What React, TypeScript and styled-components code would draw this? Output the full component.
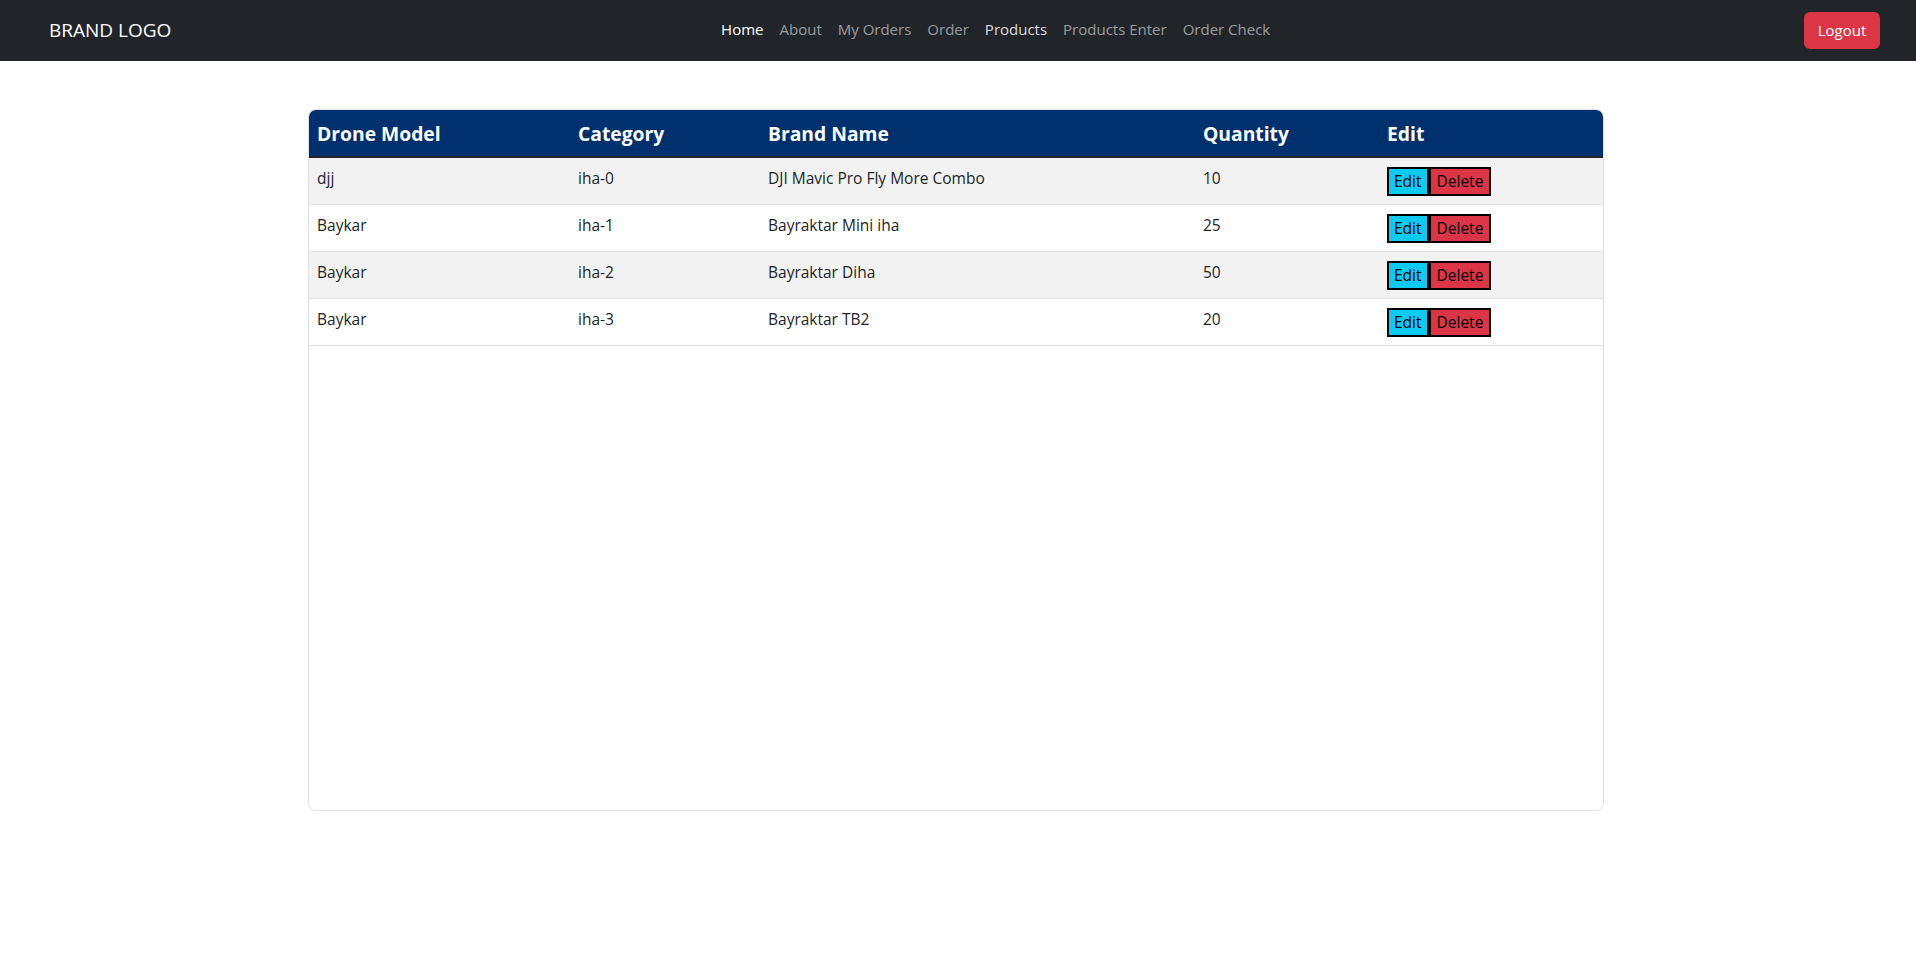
import React from "react";
import styled, { createGlobalStyle } from "styled-components";

const GlobalStyle = createGlobalStyle`
  * { box-sizing: border-box; }
  html, body { margin: 0; padding: 0; background: #fff; }
  body { font-family: "Open Sans", "Noto Sans", sans-serif; color: #212529; }
`;

const NavBar = styled.nav`
  height: 61px;
  background: #212529;
  display: flex;
  align-items: center;
  padding: 0 36px 0 49px;
`;

const Brand = styled.a`
  color: #fff;
  font-size: 19px;
  text-decoration: none;
  white-space: nowrap;
  margin-bottom: 2px;
`;

const NavList = styled.ul`
  list-style: none;
  display: flex;
  margin: 0 auto;
  padding: 0 0 4px 16px;
`;

const NavLink = styled.a<{ $tone: "active" | "bright" | "muted" }>`
  display: block;
  padding: 8px 8px;
  font-size: 15px;
  text-decoration: none;
  white-space: nowrap;
  color: ${(p) =>
    p.$tone === "active" ? "#ffffff" : p.$tone === "bright" ? "rgba(255,255,255,0.85)" : "rgba(255,255,255,0.55)"};
`;

const LogoutButton = styled.button`
  width: 76px;
  height: 37px;
  border: none;
  border-radius: 6px;
  background: #dc3545;
  color: #fff;
  font-family: inherit;
  font-size: 15px;
  padding: 0 0 2px;
`;

const Container = styled.main`
  width: 1296px;
  margin: 48px auto 0;
  position: relative;
  left: -2px;
`;

const Card = styled.div`
  height: 702px;
  border: 1px solid #dee2e6;
  border-radius: 8px;
  overflow: hidden;
`;

const Table = styled.table`
  width: 100%;
  border-collapse: collapse;
  table-layout: fixed;
`;

const HeadCell = styled.th<{ $w: number }>`
  width: ${(p) => p.$w}px;
  background: #00306e;
  color: #fff;
  font-size: 19.3px;
  font-weight: 700;
  text-align: left;
  height: 47px;
  padding: 0 8px;
  border-bottom: 2px solid #212529;
`;

const Row = styled.tr<{ $striped: boolean }>`
  background: ${(p) => (p.$striped ? "#f2f2f2" : "#ffffff")};
  border-bottom: 1px solid #dee2e6;
`;

const Cell = styled.td`
  height: 47px;
  padding: 0 8px 5px;
  font-size: 15.5px;
  color: #212529;
  vertical-align: middle;
`;

const ActionCell = styled(Cell)`
  padding-bottom: 0;
  padding-top: 1px;
`;

const ActionButton = styled.button<{ $kind: "edit" | "delete" }>`
  height: 29px;
  border: 2px solid #000;
  background: ${(p) => (p.$kind === "edit" ? "#0dcaf0" : "#dc3545")};
  color: #000;
  font-family: inherit;
  font-size: 15.5px;
  padding: 0 ${(p) => (p.$kind === "edit" ? "5px" : "6px")};
  margin: 0;
  vertical-align: middle;
`;

const columns = [
  { label: "Drone Model", w: 261 },
  { label: "Category", w: 190 },
  { label: "Brand Name", w: 435 },
  { label: "Quantity", w: 184 },
  { label: "Edit", w: 224 },
];

const rows = [
  ["djj", "iha-0", "DJI Mavic Pro Fly More Combo", "10"],
  ["Baykar", "iha-1", "Bayraktar Mini iha", "25"],
  ["Baykar", "iha-2", "Bayraktar Diha", "50"],
  ["Baykar", "iha-3", "Bayraktar TB2", "20"],
];

const navItems: { label: string; tone: "active" | "bright" | "muted" }[] = [
  { label: "Home", tone: "active" },
  { label: "About", tone: "muted" },
  { label: "My Orders", tone: "muted" },
  { label: "Order", tone: "muted" },
  { label: "Products", tone: "bright" },
  { label: "Products Enter", tone: "muted" },
  { label: "Order Check", tone: "muted" },
];

export default function App() {
  return (
    <>
      <GlobalStyle />
      <NavBar>
        <Brand href="#">BRAND LOGO</Brand>
        <NavList>
          {navItems.map((n) => (
            <li key={n.label}>
              <NavLink href="#" $tone={n.tone}>
                {n.label}
              </NavLink>
            </li>
          ))}
        </NavList>
        <LogoutButton>Logout</LogoutButton>
      </NavBar>
      <Container>
        <Card>
          <Table>
            <thead>
              <tr>
                {columns.map((c) => (
                  <HeadCell key={c.label} $w={c.w}>
                    {c.label}
                  </HeadCell>
                ))}
              </tr>
            </thead>
            <tbody>
              {rows.map((r, i) => (
                <Row key={i} $striped={i % 2 === 0}>
                  {r.map((v, j) => (
                    <Cell key={j}>{v}</Cell>
                  ))}
                  <ActionCell>
                    <ActionButton $kind="edit">Edit</ActionButton>
                    <ActionButton $kind="delete">Delete</ActionButton>
                  </ActionCell>
                </Row>
              ))}
            </tbody>
          </Table>
        </Card>
      </Container>
    </>
  );
}
